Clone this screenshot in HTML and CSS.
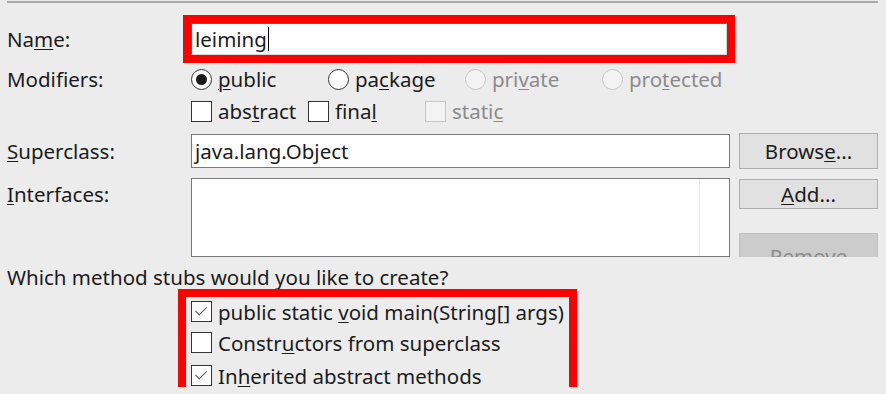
FILE: index.html
```html
<!DOCTYPE html>
<html lang="en">
<head>
    <meta charset="UTF-8">
    <title>New Java Class</title>
    <link rel="stylesheet" href="styles.css">
</head>
<body>
    <div class="rule"></div>
    <div class="form">
        <div class="row row-name">
            <span class="label">Na<u>m</u>e:</span>
            <div class="field name-field">leiming<span class="caret"></span></div>
        </div>

        <div class="row row-mods">
            <span class="label">Modifiers:</span>
            <div class="options mods">
                <span class="opt"><span class="radio checked"></span><span><u>p</u>ublic</span></span>
                <span class="opt"><span class="radio"></span><span>pa<u>c</u>kage</span></span>
                <span class="opt disabled"><span class="radio"></span><span>pri<u>v</u>ate</span></span>
                <span class="opt disabled"><span class="radio"></span><span>pro<u>t</u>ected</span></span>
            </div>
        </div>

        <div class="row">
            <span class="label"></span>
            <div class="options flags">
                <span class="opt"><span class="check"></span><span>abs<u>t</u>ract</span></span>
                <span class="opt"><span class="check"></span><span>fina<u>l</u></span></span>
                <span class="opt disabled"><span class="check"></span><span>stati<u>c</u></span></span>
            </div>
        </div>

        <div class="row row-super">
            <span class="label"><u>S</u>uperclass:</span>
            <div class="field">java.lang.Object</div>
            <button class="btn">Brows<u>e</u>...</button>
        </div>

        <div class="row row-ifaces">
            <span class="label label-top"><u>I</u>nterfaces:</span>
            <div class="list"><div class="list-bar"></div></div>
            <div class="btn-col">
                <button class="btn btn-add"><u>A</u>dd...</button>
                <button class="btn btn-remove" disabled><u>R</u>emove</button>
            </div>
        </div>

        <div class="question">Which method stubs would you like to create?</div>

        <div class="stubs">
            <span class="opt"><span class="check on"></span><span>public static <u>v</u>oid main(String[] args)</span></span>
            <span class="opt"><span class="check"></span><span>Constr<u>u</u>ctors from superclass</span></span>
            <span class="opt"><span class="check on"></span><span>In<u>h</u>erited abstract methods</span></span>
        </div>
    </div>
</body>
</html>
```

FILE: styles.css
```css
body {
    margin: 0;
    background-color: #ececec;
    font-family: "Noto Sans", "Open Sans", sans-serif;
    font-size: 20.5px;
    color: #1b1b1b;
    overflow: hidden;
}

u {
    text-decoration-thickness: 1px;
    text-underline-offset: 2px;
}

.rule {
    margin: 1px 8px 0 7px;
    border-top: 2px solid #a9a9a9;
}

.form {
    padding-left: 7px;
}

.row {
    display: flex;
    align-items: center;
    height: 32px;
}

.label {
    width: 184px;
    flex: none;
}

.label-top {
    margin-top: 2px;
}

.row-name {
    margin-top: 20px;
}

.row-mods {
    margin-top: 8px;
}

.field {
    box-sizing: border-box;
    width: 539px;
    height: 34px;
    background-color: #fff;
    border: 1px solid #7a7a7a;
    padding-left: 3px;
    display: flex;
    align-items: center;
}

.name-field {
    width: 536px;
    height: 32px;
    border-color: #0078d7 #d5d5d5 #d5d5d5 #0078d7;
    outline: 8px solid #ff0000;
}

.caret {
    display: inline-block;
    width: 1px;
    height: 24px;
    margin-left: 1px;
    background-color: #000;
}

.options {
    display: flex;
}

.opt {
    display: flex;
    align-items: center;
    gap: 6px;
    white-space: nowrap;
}

.mods .opt {
    width: 137px;
}

.flags .opt {
    width: 117px;
}

.disabled {
    color: #8b8b8b;
}

.radio {
    box-sizing: border-box;
    width: 21px;
    height: 21px;
    border: 1.5px solid #333;
    border-radius: 50%;
    background-color: #fff;
    display: flex;
    align-items: center;
    justify-content: center;
    flex: none;
}

.radio.checked::after {
    content: "";
    width: 11px;
    height: 11px;
    border-radius: 50%;
    background-color: #1b1b1b;
}

.disabled .radio,
.disabled .check {
    border-color: #c6c6c6;
    background-color: #f3f3f3;
}

.check {
    box-sizing: border-box;
    width: 21px;
    height: 21px;
    border: 1px solid #333;
    background-color: #fff;
    position: relative;
    flex: none;
}

.check.on::after {
    content: "";
    position: absolute;
    left: 6px;
    top: 2px;
    width: 5px;
    height: 10px;
    border: solid #555;
    border-width: 0 1.5px 1.5px 0;
    transform: rotate(45deg);
}

.row-super {
    margin-top: 6px;
    height: 36px;
}

.btn {
    box-sizing: border-box;
    width: 139px;
    height: 36px;
    margin-left: 9px;
    background-color: #e1e1e1;
    border: 1px solid #adadad;
    font: inherit;
    color: #1b1b1b;
    padding: 0;
}

.row-ifaces {
    margin-top: 9px;
    height: 79px;
    align-items: stretch;
}

.list {
    box-sizing: border-box;
    width: 539px;
    background-color: #fff;
    border: 1px solid #7a7a7a;
    display: flex;
    justify-content: flex-end;
}

.list-bar {
    width: 29px;
    border-left: 1px solid #e3ecf7;
}

.btn-col {
    display: flex;
    flex-direction: column;
    overflow: hidden;
}

.btn-add {
    margin-top: 1px;
    height: 37px;
}

.btn-remove {
    margin-top: 24px;
    flex: none;
    height: 46px;
    background-color: #cccccc;
    border-color: #bfbfbf;
    color: #8b8b8b;
}

.question {
    margin-top: 4px;
    height: 32px;
    line-height: 32px;
}

.stubs {
    margin: 4px 0 0 179px;
    width: 383px;
    height: 90px;
    outline: 8px solid #ff0000;
    display: grid;
    grid-template-rows: 29px 33px 33px;
    padding-left: 5px;
    box-sizing: border-box;
}
```
